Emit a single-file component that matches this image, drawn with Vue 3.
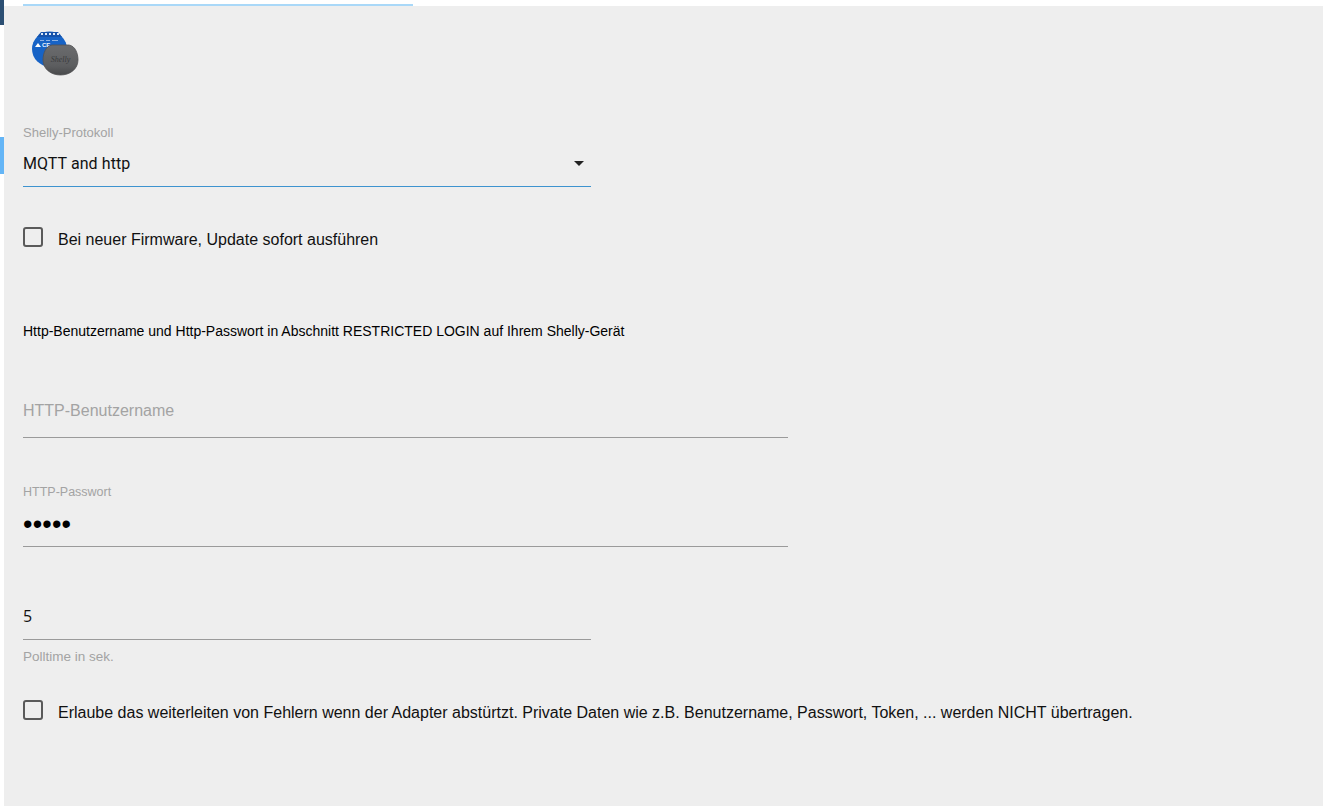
<script setup>
const passwordDots = '•••••'
</script>

<template>
  <div class="page">
    <aside class="rail">
      <div class="rail-top"></div>
      <div class="rail-active"></div>
    </aside>
    <div class="main">
      <div class="tabs"><div class="tab-line"></div></div>
      <div class="panel">
        <svg class="logo" width="48" height="48" viewBox="0 0 48 48">
          <defs>
            <linearGradient id="shell" x1="0" y1="0" x2="0" y2="1">
              <stop offset="0" stop-color="#6b6c6e" />
              <stop offset="0.7" stop-color="#5c5d5f" />
              <stop offset="1" stop-color="#48494b" />
            </linearGradient>
          </defs>
          <circle cx="17.5" cy="19" r="17.5" fill="#1763c6" />
          <path d="M9 2h17l4 5H5z" fill="#1552ab" />
          <g fill="#dce8f7">
            <rect x="9" y="3" width="2" height="2" />
            <rect x="13" y="3" width="2" height="2" />
            <rect x="17" y="3" width="2" height="2" />
            <rect x="21" y="3" width="2" height="2" />
            <rect x="25" y="3" width="2" height="2" />
            <rect x="8" y="10" width="4" height="1" opacity="0.6" />
            <rect x="14" y="10" width="4" height="1" opacity="0.6" />
            <rect x="20" y="10" width="6" height="1" opacity="0.6" />
            <path d="M3 17l3-4 3 4z" fill="#fff" />
          </g>
          <text x="10" y="17" class="logo-mark">CE</text>
          <path d="M20 15H37C43 16 46 23 46 30 46 39 38 45 28.5 45 19 45 11 39 11 30 11 23 14 16 20 15Z" fill="url(#shell)" stroke="#505153" stroke-width="0.8" />
          <text x="28.5" y="32" class="logo-name">Shelly</text>
        </svg>

        <div class="select-field">
          <label class="small-label">Shelly-Protokoll</label>
          <div class="select-value">
            <span>MQTT and http</span>
            <span class="arrow"></span>
          </div>
        </div>

        <label class="check-row first-check">
          <span class="box"></span>
          <span class="check-text">Bei neuer Firmware, Update sofort ausführen</span>
        </label>

        <p class="hint">Http-Benutzername und Http-Passwort in Abschnitt RESTRICTED LOGIN auf Ihrem Shelly-Gerät</p>

        <div class="user-field">HTTP-Benutzername</div>

        <div class="pass-field">
          <label class="small-label pass-label">HTTP-Passwort</label>
          <div class="pass-value">{{ passwordDots }}</div>
        </div>

        <div class="poll-field">
          <div class="poll-value">5</div>
          <div class="poll-help">Polltime in sek.</div>
        </div>

        <label class="check-row last-check">
          <span class="box"></span>
          <span class="check-text">Erlaube das weiterleiten von Fehlern wenn der Adapter abstürtzt. Private Daten wie z.B. Benutzername, Passwort, Token, ... werden NICHT übertragen.</span>
        </label>
      </div>
    </div>
  </div>
</template>

<style scoped>
.page {
  display: flex;
  height: 806px;
  overflow: hidden;
  font-family: "Liberation Sans", Arial, sans-serif;
  color: #000;
}

.rail {
  width: 4px;
  flex-shrink: 0;
  background: #fff;
}

.rail-top {
  height: 25px;
  background: #2c4f73;
}

.rail-active {
  height: 37px;
  margin-top: 112px;
  background: #64b5f6;
}

.main {
  flex: 1;
  min-width: 0;
}

.tabs {
  height: 6px;
  padding-left: 19px;
  background: #fff;
}

.tab-line {
  width: 390px;
  height: 6px;
  box-sizing: border-box;
  border-bottom: 2px solid #a9d8f8;
}

.panel {
  height: 800px;
  padding-left: 19px;
  background: #eeeeee;
  overflow: hidden;
}

.logo {
  display: block;
  margin: 24px 0 0 9px;
}

.logo-mark {
  font-size: 6px;
  font-weight: 700;
  fill: #eef4fb;
}

.logo-name {
  font-family: "Liberation Serif", serif;
  font-size: 8px;
  font-style: italic;
  text-anchor: middle;
  fill: #3a3b3d;
}

.small-label {
  display: block;
  font-size: 13px;
  line-height: 14px;
  color: #a3a3a3;
}

.pass-label {
  font-size: 12.5px;
}

.select-field {
  width: 568px;
  margin-top: 48px;
}

.select-value {
  display: flex;
  justify-content: space-between;
  align-items: center;
  height: 47px;
  box-sizing: border-box;
  border-bottom: 1px solid #3d93cf;
  font-family: Roboto, sans-serif;
  font-size: 16px;
  letter-spacing: 0.08px;
  color: #111;
}

.arrow {
  width: 0;
  height: 0;
  margin-right: 7px;
  border-left: 5px solid transparent;
  border-right: 5px solid transparent;
  border-top: 5px solid #222;
}

.check-row {
  display: flex;
  align-items: flex-start;
  gap: 15px;
  font-size: 16px;
  color: #111;
}

.check-text {
  padding-top: 3px;
  line-height: 20px;
}

.first-check {
  margin-top: 40px;
}

.last-check {
  margin-top: 36px;
}

.box {
  width: 20px;
  height: 20px;
  box-sizing: border-box;
  flex-shrink: 0;
  border: 2px solid #5a5a5a;
  border-radius: 3px;
}

.hint {
  margin: 73px 0 0;
  font-size: 14px;
  line-height: 16px;
}

.user-field {
  width: 765px;
  height: 47px;
  margin-top: 52px;
  box-sizing: border-box;
  border-bottom: 1px solid #9a9a9a;
  font-size: 16px;
  line-height: 24px;
  padding-top: 8px;
  color: #a3a3a3;
}

.pass-field {
  width: 765px;
  margin-top: 47px;
}

.pass-value {
  height: 48px;
  box-sizing: border-box;
  border-bottom: 1px solid #9a9a9a;
  font-size: 27px;
  letter-spacing: 0.2px;
  line-height: 50px;
}

.poll-field {
  width: 568px;
  margin-top: 53px;
}

.poll-value {
  height: 40px;
  box-sizing: border-box;
  border-bottom: 1px solid #9a9a9a;
  font-family: "Open Sans", sans-serif;
  font-size: 16px;
  line-height: 32px;
  color: #111;
}

.poll-help {
  margin-top: 10px;
  font-size: 13.5px;
  line-height: 14px;
  color: #a3a3a3;
}
</style>

<style>
html, body {
  margin: 0;
  background: #fff;
}
</style>
